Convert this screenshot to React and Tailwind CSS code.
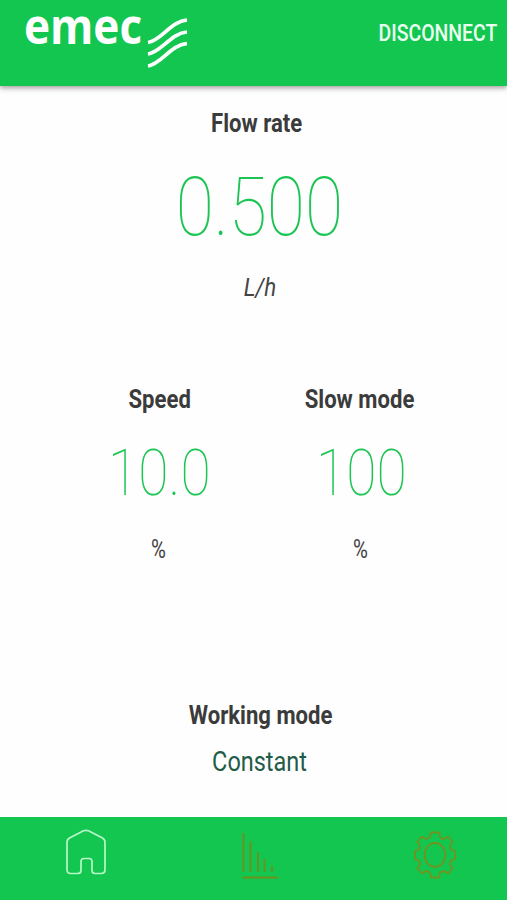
import React from 'react';

const readings = [
  { label: 'Speed', value: '10.0', unit: '%', labelPad: 'pl-px', pad: '' },
  { label: 'Slow mode', value: '100', unit: '%', labelPad: 'pr-0.5', pad: 'pl-0.5' },
];

function Label({ children }) {
  return (
    <h2 className="text-[26px] leading-8 font-bold text-[#3b3b3b] whitespace-nowrap scale-x-[0.85]">{children}</h2>
  );
}

function Waves() {
  return (
    <svg className="w-[42px] h-[54px]" viewBox="0 0 42 54" fill="none" stroke="white" strokeWidth="3.700">
      <path d="M1 26.500C14 25 24 5 40 4" />
      <path d="M1 38C14 36.500 24 17 40 16" />
      <path d="M1 50C14 48.500 24 28.500 40 27.500" />
    </svg>
  );
}

function HomeIcon() {
  return (
    <svg className="w-10 h-[46px]" viewBox="0 0 40 46" fill="none" stroke="#b9f7c6" strokeWidth="1.700">
      <path d="M5 44.500Q1 44.500 1 40.500V13.500Q1 10.500 3.500 9L17.500 1.800Q20 0.800 22.500 1.800L36.500 9Q39 10.500 39 13.500V40.500Q39 44.500 35 44.500H29Q26 44.500 26 41.500V32.500Q26 29.500 23 29.500H18Q15 29.500 15 32.500V41.500Q15 44.500 12 44.500Z" />
    </svg>
  );
}

function ChartIcon() {
  return (
    <svg className="w-9 h-[46px]" viewBox="0 0 36 46" fill="none" stroke="#6f901f" strokeWidth="1.900">
      <path d="M1.500 0V39M8.500 8.500V39M16 19V39M22.500 26V39M30 33V39" />
      <path d="M0.500 44.500H36" />
    </svg>
  );
}

function GearIcon() {
  return (
    <svg className="w-[42px] h-12" viewBox="0 0 42 48" fill="none" stroke="#74921f" strokeWidth="1.800" strokeLinejoin="round">
      <path d="M17 1.500H25L26 6Q28.500 9 31 7.500L34 5.500L38.500 10.500L36.500 14Q35 17.500 38 19L41 20V28L38 29Q35 30.500 36.500 34L38.500 37.500L34 42.500L31 40.500Q28.500 39 26 42L25 46.500H17L16 42Q13.500 39 11 40.500L8 42.500L3.500 37.500L5.500 34Q7 30.500 4 29L1 28V20L4 19Q7 17.500 5.500 14L3.500 10.500L8 5.500L11 7.500Q13.500 9 16 6Z" />
      <ellipse cx="21" cy="24" rx="10.300" ry="12" />
    </svg>
  );
}

export default function App() {
  return (
    <div className="w-[507px] h-[900px] flex flex-col overflow-hidden bg-[#fefefe] font-['Roboto',sans-serif]">
      <header className="h-[86px] shrink-0 flex justify-between bg-[#12c650] shadow-[0_2px_5px_rgba(80,60,60,0.5)]">
        <div className="flex pl-6">
          <div className="w-[119px] flex">
            <span className="h-[50px] origin-left text-[49px] leading-[50px] font-bold text-white font-['Open_Sans',sans-serif] scale-x-[0.9]">emec</span>
          </div>
          <div className="pt-4 pl-1"><Waves /></div>
        </div>
        <button className="h-[68px] pr-[11px] origin-right text-[23px] leading-[68px] font-medium text-[#e9fff0] whitespace-nowrap scale-x-[0.845]">DISCONNECT</button>
      </header>

      <main className="flex-1 flex flex-col items-center pt-[21px] pl-3">
        <div className="pr-[5px]"><Label>Flow rate</Label></div>
        <p className="mt-[29px] text-[81px] leading-[80px] font-[150] text-[#1cc453] scale-x-[0.86]">0.500</p>
        <p className="mt-[23px] text-[26px] leading-8 italic text-[#444] scale-x-[0.86]">L/h</p>

        <div className="mt-[80px] grid grid-cols-2 w-[402px]">
          {readings.map((r) => (
            <section key={r.label} className="flex flex-col items-center">
              <div className={r.labelPad}><Label>{r.label}</Label></div>
              <div className={`flex flex-col items-center ${r.pad}`}>
                <p className="mt-[26px] text-[65px] leading-[64px] font-[150] text-[#1cc453] scale-x-[0.85]">{r.value}</p>
                <p className="mt-7 text-[26px] leading-8 text-[#444] scale-x-[0.78]">{r.unit}</p>
              </div>
            </section>
          ))}
        </div>

        <div className="mt-[134px] flex flex-col items-center">
          <div className="pl-0.5"><Label>Working mode</Label></div>
          <p className="mt-[15px] text-[27px] leading-8 text-[#225b48] scale-x-[0.87]">Constant</p>
        </div>
      </main>

      <nav className="h-[83px] shrink-0 flex justify-between bg-[#12c650] pt-3 pl-[66px] pr-[51px]">
        <button className="h-[46px]"><HomeIcon /></button>
        <button className="h-[46px] mt-1"><ChartIcon /></button>
        <button className="h-12 mt-0.5"><GearIcon /></button>
      </nav>
    </div>
  );
}
